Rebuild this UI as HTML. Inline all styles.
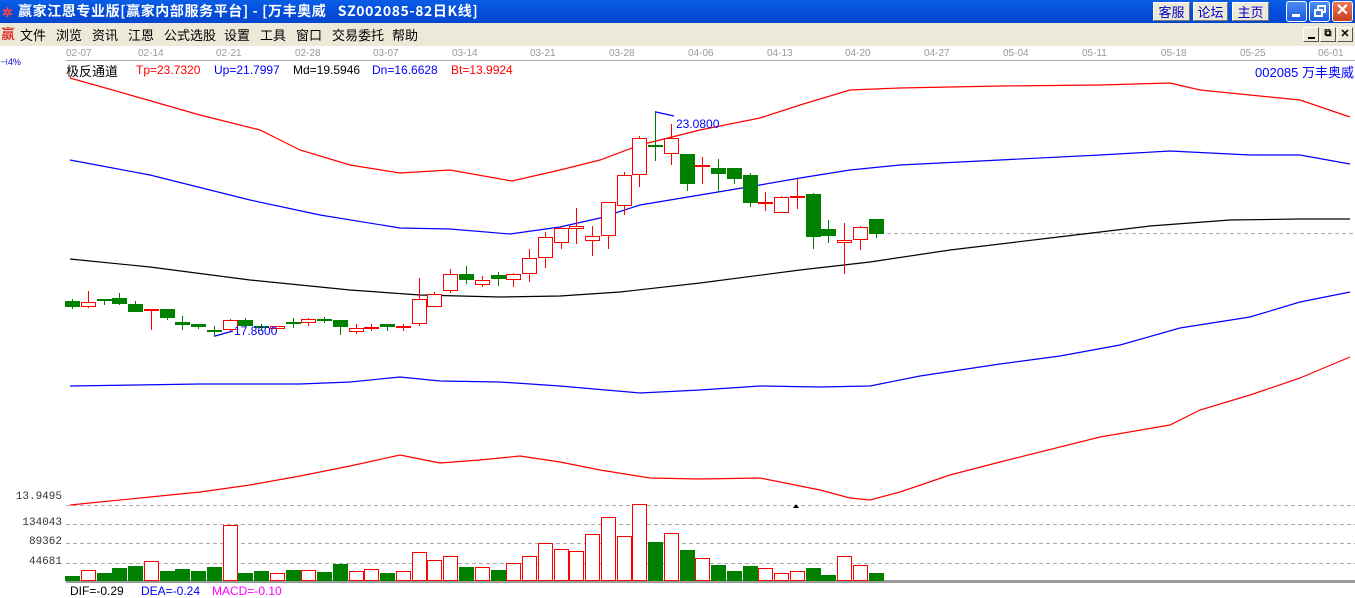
<!DOCTYPE html>
<html><head><meta charset="utf-8">
<style>
*{margin:0;padding:0;box-sizing:border-box}
body{width:1355px;height:598px;overflow:hidden;background:#fff;font-family:"Liberation Sans","WenQuanYi Zen Hei","Noto Sans CJK SC",sans-serif;position:relative}
#title{position:absolute;left:0;top:0;width:1355px;height:23px;background:linear-gradient(#0a5fe6,#0550dd 40%,#0347cf);color:#fff;font:bold 14px "WenQuanYi Zen Hei","Noto Sans CJK SC",sans-serif;line-height:23px}
#menu{position:absolute;left:0;top:23px;width:1355px;height:23px;background:#ece9d8;font:13px "WenQuanYi Zen Hei","Noto Sans CJK SC",sans-serif;line-height:23px}
.tb{position:absolute;top:2px;height:19px;background:#ece9d8;border:1px solid #fff;border-right-color:#777;border-bottom-color:#777;color:#0000c8;font:13px "WenQuanYi Zen Hei","Noto Sans CJK SC",sans-serif;line-height:17px;text-align:center}
.wb{position:absolute;top:1px;width:21px;height:21px;border:1px solid #fff;border-radius:3px;background:linear-gradient(#4b8bf5,#1c5ae0)}
.sb{position:absolute;top:27px;width:16px;height:15px;background:#ece9d8;border:1px solid #fff;border-right-color:#555;border-bottom-color:#555}
.t{position:absolute;white-space:nowrap}
</style></head><body>
<div id="title"><span style="position:absolute;left:2px;top:0;color:#f44;font-size:13px">✲</span><span style="position:absolute;left:18px;letter-spacing:0.6px">赢家江恩专业版[赢家内部服务平台] - [万丰奥威&nbsp;&nbsp;&nbsp;SZ002085-82日K线]</span>
<div class="tb" style="left:1153px;width:37px">客服</div>
<div class="tb" style="left:1193px;width:35px">论坛</div>
<div class="tb" style="left:1232px;width:37px">主页</div>
<div class="wb" style="left:1286px"><div style="position:absolute;left:5px;top:12px;width:8px;height:3px;background:#fff"></div></div>
<div class="wb" style="left:1309px"><div style="position:absolute;left:7px;top:3px;width:9px;height:8px;border:2px solid #fff"></div><div style="position:absolute;left:4px;top:7px;width:9px;height:8px;border:2px solid #fff;background:#3a75ea"></div></div>
<div class="wb" style="left:1332px;background:linear-gradient(#e8785a,#c8401c);color:#fff;font:bold 16px 'Liberation Sans';text-align:center;line-height:18px">✕</div>
</div>
<div id="menu"><span class="t" style="left:1px;color:#d00;font-size:14px">赢</span>
<span class="t" style="left:20px">文件</span><span class="t" style="left:56px">浏览</span><span class="t" style="left:92px">资讯</span><span class="t" style="left:128px">江恩</span><span class="t" style="left:164px">公式选股</span><span class="t" style="left:224px">设置</span><span class="t" style="left:260px">工具</span><span class="t" style="left:296px">窗口</span><span class="t" style="left:332px">交易委托</span><span class="t" style="left:392px">帮助</span>
</div>
<div class="sb" style="left:1303px"><div style="position:absolute;left:4px;top:9px;width:7px;height:2px;background:#000"></div></div>
<div class="sb" style="left:1320px;font:bold 10px 'Liberation Sans';text-align:center;line-height:12px">⧉</div>
<div class="sb" style="left:1337px;font:bold 11px 'Liberation Sans';text-align:center;line-height:13px">✕</div>

<div style="position:absolute;left:0;top:46px;width:1355px;font:10px 'Liberation Sans';color:#999">
<span class="t" style="left:66px;top:2px">02-07</span><span class="t" style="left:138px;top:2px">02-14</span><span class="t" style="left:216px;top:2px">02-21</span><span class="t" style="left:295px;top:2px">02-28</span><span class="t" style="left:373px;top:2px">03-07</span><span class="t" style="left:452px;top:2px">03-14</span><span class="t" style="left:530px;top:2px">03-21</span><span class="t" style="left:609px;top:2px">03-28</span><span class="t" style="left:688px;top:2px">04-06</span><span class="t" style="left:767px;top:2px">04-13</span><span class="t" style="left:845px;top:2px">04-20</span><span class="t" style="left:924px;top:2px">04-27</span><span class="t" style="left:1003px;top:2px">05-04</span><span class="t" style="left:1082px;top:2px">05-11</span><span class="t" style="left:1161px;top:2px">05-18</span><span class="t" style="left:1240px;top:2px">05-25</span><span class="t" style="left:1318px;top:2px">06-01</span>
</div>
<div style="position:absolute;left:66px;top:60px;width:1289px;height:1px;background:#aaa"></div>
<div class="t" style="left:0;top:57px;font:9px 'Liberation Sans';color:#00c">⊣4%</div>
<div style="position:absolute;left:0;top:61px;width:1355px;font:12px 'Liberation Sans','WenQuanYi Zen Hei',sans-serif">
<span class="t" style="left:66px;top:0;font-size:13px">极反通道</span>
<span class="t" style="left:136px;top:2px;color:#f00">Tp=23.7320</span>
<span class="t" style="left:214px;top:2px;color:#00f">Up=21.7997</span>
<span class="t" style="left:293px;top:2px;color:#000">Md=19.5946</span>
<span class="t" style="left:372px;top:2px;color:#00f">Dn=16.6628</span>
<span class="t" style="left:451px;top:2px;color:#f00">Bt=13.9924</span>
<span class="t" style="right:1px;top:1px;color:#00f;font-size:13px">002085 万丰奥威</span>
</div>
<div style="position:absolute;left:0;top:490px;width:62px;font:11px 'Liberation Mono',monospace;color:#333;text-align:right">
<div class="t" style="right:0;top:1px">13.9495</div><div class="t" style="right:0;top:27px">134043</div><div class="t" style="right:0;top:46px">89362</div><div class="t" style="right:0;top:66px">44681</div>
</div>
<div style="position:absolute;left:70px;top:584px;font:12px 'Liberation Sans'">
<span class="t" style="left:0;top:0">DIF=-0.29</span><span class="t" style="left:71px;top:0;color:#00f">DEA=-0.24</span><span class="t" style="left:142px;top:0;color:#f0f">MACD=-0.10</span>
</div>
<svg id="s" width="1355" height="598" style="position:absolute;left:0;top:0" shape-rendering="crispEdges">
<g stroke="#aaa" stroke-dasharray="4,3" stroke-width="1">
<line x1="66" y1="505.5" x2="1355" y2="505.5"/><line x1="66" y1="524.5" x2="1355" y2="524.5"/><line x1="66" y1="543.5" x2="1355" y2="543.5"/><line x1="66" y1="563.5" x2="1355" y2="563.5"/>
<line x1="880" y1="233.5" x2="1355" y2="233.5"/>
</g>
<rect x="66" y="580" width="1289" height="3" fill="#999"/>
<polygon points="793,508 796,504 799,508" fill="#000"/>
<g fill="none" stroke-width="1.2" shape-rendering="auto">
<polyline stroke="#f00" points="70,78 130,95 200,115 260,130 300,150 350,165 400,173 450,170 512,181 560,170 600,160 640,145 700,130 760,118 800,105 850,90 900,88 1000,86 1100,85 1170,83 1200,90 1250,95 1300,100 1350,117"/>
<polyline stroke="#00f" points="70,160 150,175 250,200 320,215 400,228 450,229 510,234 560,227 600,218 640,205 700,195 760,185 800,178 850,170 900,165 1000,160 1100,155 1170,151 1250,155 1300,155 1350,164"/>
<polyline stroke="#000" points="70,259 150,267 250,280 350,290 420,295 500,297 560,296 620,292 700,283 800,270 870,262 950,250 1050,238 1150,226 1230,220 1300,219 1350,219"/>
<polyline stroke="#00f" points="70,386 200,384 300,384 350,382 400,377 440,381 500,382 560,386 640,393 700,390 760,386 820,387 870,386 920,376 1000,364 1060,356 1120,345 1180,328 1250,317 1300,302 1350,292"/>
<polyline stroke="#f00" points="70,505 150,497 200,492 250,485 300,476 350,466 400,455 440,463 480,460 520,456 560,462 600,470 650,478 700,479 760,478 820,490 850,498 870,500 900,492 950,475 1000,462 1100,437 1170,425 1200,410 1250,395 1300,378 1350,357"/>
<polyline stroke="#00f" points="656,112 674,116"/>
<polyline stroke="#00f" points="215,336 233,331"/>
</g>
<g id="c"></g>
<text x="676" y="128" fill="#00f" font-family="Liberation Sans" font-size="12">23.0800</text>
<text x="234" y="335" fill="#00f" font-family="Liberation Sans" font-size="12">17.8600</text>
</svg>
<script>
var d=[[301,306,299,308,'g'],[302,306,291,307,'r'],[299,299,299,304,'g'],[298,303,293,304,'g'],[304,311,301,311,'g'],[309,310,309,329,'r'],[309,317,309,319,'g'],[322,324,316,329,'g'],[324,326,324,328,'g'],[330,330,326,336,'g'],[320,329,319,330,'r'],[320,325,318,326,'g'],[326,326,324,330,'g'],[326,328,326,328,'r'],[322,322,318,327,'g'],[319,322,318,325,'r'],[319,319,317,322,'g'],[320,326,320,334,'g'],[328,331,324,333,'r'],[327,327,324,330,'r'],[324,326,324,330,'g'],[326,326,324,330,'r'],[299,323,278,325,'r'],[294,306,292,306,'r'],[274,290,269,292,'r'],[274,279,266,283,'g'],[280,284,276,286,'r'],[275,278,272,285,'g'],[274,279,273,286,'r'],[258,273,249,281,'r'],[237,257,232,267,'r'],[228,242,226,248,'r'],[226,228,208,243,'r'],[236,240,226,255,'r'],[202,235,202,248,'r'],[175,205,172,214,'r'],[138,174,136,186,'r'],[145,146,111,160,'g'],[138,153,124,164,'r'],[154,183,154,190,'g'],[165,166,157,183,'r'],[168,173,159,191,'g'],[168,178,168,183,'g'],[175,202,173,206,'g'],[202,202,192,210,'r'],[197,212,196,212,'r'],[196,197,179,208,'r'],[194,236,193,248,'g'],[229,235,220,242,'g'],[240,242,223,273,'r'],[227,239,226,249,'r'],[219,233,219,237,'g']];
var v=[576,570,573,568,566,561,571,569,571,567,525,573,571,573,570,570,572,564,571,569,573,571,552,560,556,567,567,570,563,556,543,549,551,534,517,536,504,542,533,550,558,565,571,566,568,573,571,568,575,556,565,573];
var h='';
for(var i=0;i<d.length;i++){var x=Math.round(72+i*15.76),c=d[i],col=c[4]=='r'?'#f00':'#008000';
h+='<line x1="'+(x+.5)+'" y1="'+c[2]+'" x2="'+(x+.5)+'" y2="'+(c[3]+1)+'" stroke="'+col+'" stroke-width="1"/>';
var bh=c[1]-c[0];
if(bh<=1){h+='<rect x="'+(x-7)+'" y="'+c[0]+'" width="15" height="2" fill="'+col+'"/>';}
else if(c[4]=='r'){h+='<rect x="'+(x-6.5)+'" y="'+(c[0]+.5)+'" width="14" height="'+bh+'" fill="#fff" stroke="#f00" stroke-width="1"/>';}
else{h+='<rect x="'+(x-7)+'" y="'+c[0]+'" width="15" height="'+(bh+1)+'" fill="#008000"/>';}
var vc=d[i][4];
if(vc=='r')h+='<rect x="'+(x-6.5)+'" y="'+(v[i]+.5)+'" width="14" height="'+(580-v[i])+'" fill="#fff" stroke="#f00" stroke-width="1"/>';
else h+='<rect x="'+(x-7)+'" y="'+v[i]+'" width="15" height="'+(581-v[i])+'" fill="#008000"/>';
}
document.getElementById('c').innerHTML=h;
</script>
</body></html>
